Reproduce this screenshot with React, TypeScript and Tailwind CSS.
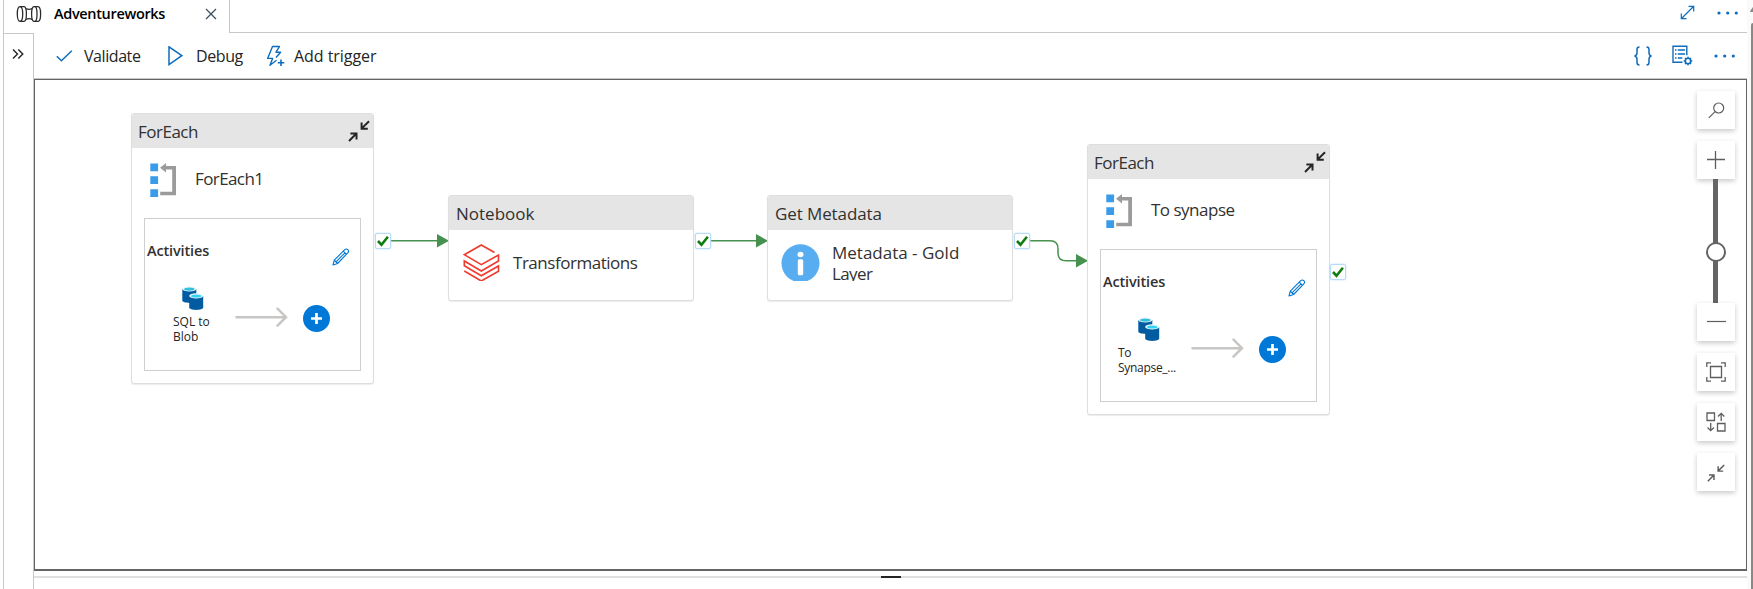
import React from "react";

const FONT = "font-['Open_Sans','Noto_Sans',sans-serif]";

function CollapseIcon({ className }: { className: string }) {
  return (
    <svg className={className} viewBox="0 0 22 22" fill="none" stroke="currentColor">
      <path d="M21 1.2 13.8 8.4M13.6 2.6v6.1h6.2M1 21l7.2-7.2M2.4 13.4h6.1v6.2" />
    </svg>
  );
}

function PipelineIcon() {
  return (
    <svg className="h-[18px] w-[26px]" viewBox="0 0 26 18" fill="none" stroke="#2b2b2b" strokeWidth="1.300">
      <ellipse cx="4" cy="9" rx="2.700" ry="7.400" />
      <path d="M4 1.600h4c1.500 0 2.400 3.300 2.400 7.400S9.500 16.400 8 16.400H4" />
      <path d="M10 3.700c1.600.7 4.600.7 6.200 0M10 14.300c1.600-.7 4.600-.7 6.200 0" />
      <path d="M22 1.600h-4c-1.500 0-2.400 3.300-2.400 7.400s.9 7.400 2.400 7.400h4" />
      <path d="M18.800 1.600c1.400 0 2.200 3.300 2.200 7.400s-.8 7.400-2.200 7.400M22 1.600c1.600 0 2.600 3.300 2.600 7.400S23.600 16.400 22 16.400" />
    </svg>
  );
}

function Dots() {
  return (
    <svg className="h-[6px] w-[22px]" viewBox="0 0 22 6" fill="#0f6cbd">
      <circle cx="2" cy="3" r="1.600" />
      <circle cx="10.700" cy="3" r="1.600" />
      <circle cx="19.300" cy="3" r="1.600" />
    </svg>
  );
}

function TabStrip() {
  return (
    <div className="ml-[3px] flex h-[33px] w-[1744px]">
      <div className="flex w-[227px] border-x border-[#c8c8c8] pl-[12px]">
        <div className="flex h-[27px] items-center">
          <PipelineIcon />
          <span className="ml-[12px] w-[111px] whitespace-nowrap text-[14.5px] font-semibold tracking-[-0.34px] text-black">
            Adventureworks
          </span>
          <svg className="ml-[40px] h-[12px] w-[12px]" viewBox="0 0 12 12" fill="none" stroke="#3b4a5c" strokeWidth="1.200">
            <path d="M1 1l10 10M11 1 1 11" />
          </svg>
        </div>
      </div>
      <div className="flex flex-1 items-start justify-end border-b border-[#c8c8c8] pr-[8px]">
        <svg className="mt-[5px] mr-[22px] h-[15px] w-[15px]" viewBox="0 0 15 15" fill="none" stroke="#0f6cbd" strokeWidth="1.200">
          <path d="M1.500 13.500l12-12M8.500 1.300h5.200v5.200M1.300 8.500v5.200h5.200" />
        </svg>
        <div className="mt-[10px] flex">
          <Dots />
        </div>
      </div>
    </div>
  );
}

function Toolbar() {
  return (
    <div className="flex h-[46px] items-center border-b border-[#c8c8c8] pl-[22px] text-[16px] text-[#242424]">
      <svg className="h-[12px] w-[17px]" viewBox="0 0 17 12" fill="none" stroke="#0f6cbd" strokeWidth="1.500">
        <path d="M.8 6.200 5.400 10.800 15.800.8" />
      </svg>
      <span className="ml-[11px] w-[57px] whitespace-nowrap tracking-[-0.43px]">Validate</span>
      <svg className="ml-[27px] h-[20px] w-[15px]" viewBox="0 0 15 20" fill="none" stroke="#0f6cbd" strokeWidth="1.500">
        <path d="M1 .8v17.800L13.800 9.700z" />
      </svg>
      <span className="ml-[13px] w-[48px] whitespace-nowrap tracking-[-0.4px]">Debug</span>
      <svg className="ml-[22px] h-[22px] w-[19px]" viewBox="0 0 19 22" fill="none" stroke="#0f6cbd" strokeWidth="1.400" strokeLinejoin="round">
        <path d="M10.500 15.200 4 20.200 6.600 13.400H1.600L6.500 1.500h7L10 7.200h4.600L10 12.500" />
        <path d="M15 14.500v6.500M11.800 17.700h6.500" strokeWidth="1.600" />
      </svg>
      <span className="ml-[9px] whitespace-nowrap tracking-[-0.05px]">Add trigger</span>
      <div className="ml-auto flex items-center pr-[11px]">
        <svg className="h-[20px] w-[20px]" viewBox="0 0 20 20" fill="none" stroke="#0f6cbd" strokeWidth="1.500">
          <path d="M6.500 1C4.600 1 4 1.900 4 3.500v3.200C4 8.600 3.200 9.700 1.500 10c1.700.3 2.500 1.400 2.500 3.300v3.200C4 18.100 4.600 19 6.500 19M13.500 1c1.900 0 2.500.9 2.500 2.500v3.200c0 1.900.8 3 2.500 3.300-1.700.3-2.500 1.400-2.500 3.300v3.200c0 1.600-.6 2.500-2.500 2.500" />
        </svg>
        <svg className="ml-[19px] h-[21px] w-[21px]" viewBox="0 0 21 21" fill="none" stroke="#0f6cbd" strokeWidth="1.400">
          <path d="M10.500 17.300H1V1.200h13.800v9M3 5h1.500M3 9h1.500M3 13h1.500M5.800 5h7.200M5.800 9h7.200M5.800 13h4.500" />
          <circle cx="16" cy="16" r="2.700" strokeWidth="1.600" />
          <path
            d="M16 11.700v1.600M16 18.700v1.600M11.700 16h1.600M18.700 16h1.600M13 13l1.100 1.100M17.900 17.900 19 19M19 13l-1.100 1.100M14.100 17.900 13 19"
            strokeWidth="1.500"
          />
        </svg>
        <div className="ml-[21px]">
          <Dots />
        </div>
      </div>
    </div>
  );
}

function ForEachIcon() {
  return (
    <svg className="h-[36px] w-[28px]" viewBox="0 0 28 36">
      <path fill="#3a9be8" d="M.3.500h7.800v7.800H.3zM.3 13.200h7.800V21H.3zM.3 26.200h7.800V34H.3z" />
      <path fill="#9b9b9b" d="M10 4.700 16 0v3h10v29.300H10.200v-3.500h12V6.500H16v3z" />
    </svg>
  );
}

function SqlIcon() {
  return (
    <svg className="h-[25px] w-[22px]" viewBox="0 0 22 25">
      <path fill="#005ba1" d="M.3 3v11.500c0 1.300 3.200 2.300 7 2.300s7-1 7-2.300V3z" />
      <ellipse cx="7.300" cy="3" rx="7" ry="2.600" fill="#e8f6fb" />
      <ellipse cx="7.300" cy="3.100" rx="5.200" ry="1.600" fill="#32bedd" />
      <path fill="#005ba1" d="M7.200 10v11.500c0 1.300 3.100 2.400 7 2.400s7-1.100 7-2.400V10z" />
      <ellipse cx="14.200" cy="9.900" rx="7" ry="2.600" fill="#e8f6fb" />
      <ellipse cx="14.200" cy="10" rx="5.200" ry="1.600" fill="#32d4f5" />
    </svg>
  );
}

const NODE = "absolute overflow-hidden rounded-[3px] border border-[#dedede] bg-white shadow-[0_1px_1px_rgba(0,0,0,0.08)]";

function ForEachNode({
  place,
  title,
  titleClass,
  activity,
  activityClass,
}: {
  place: string;
  title: string;
  titleClass: string;
  activity: [string, string];
  activityClass: string;
}) {
  return (
    <div className={`${NODE} h-[271px] w-[243px] ${place}`}>
      <div className="flex h-[34px] justify-between bg-[#e5e5e5] pr-[3px] pl-[6px] text-[#323130]">
        <span className="text-[17px] leading-[35px] tracking-[-0.5px]">ForEach</span>
        <CollapseIcon className="mt-[6px] h-[22px] w-[22px] stroke-2 text-[#252525]" />
      </div>
      <div className="flex h-[70px] pl-[18px]">
        <div className="mt-[15px]">
          <ForEachIcon />
        </div>
        <span className={`ml-[17px] text-[17px] leading-[62px] text-[#323130] ${titleClass}`}>{title}</span>
      </div>
      <div className="ml-[12px] h-[153px] w-[217px] border border-[#cfcfcf]">
        <div className="flex h-[66px] justify-between pr-[10px] pl-[2px]">
          <span className="mt-[21px] text-[14.5px] leading-[22px] font-semibold tracking-[-0.15px] text-[#323130]">Activities</span>
          <svg className="mt-[29px] h-[18px] w-[18px]" viewBox="0 0 18 18" fill="none" stroke="#0078d4" strokeWidth="1.100" strokeLinejoin="round">
            <path d="M1 17l1.300-4.800L12.700 1.700c1-1 2.200-.9 3.100 0s1 2.100 0 3.100L5.600 15.500zM2.300 12.200l3.300 3.300M11.300 3.200l3.300 3.200M4 13.800 13 4.800" />
          </svg>
        </div>
        <div className="flex">
          <div className={`w-[90px] ${activityClass}`}>
            <div className="ml-[37px] pt-[1px]">
              <SqlIcon />
            </div>
            <div className="mt-[3px] text-[12px] leading-[15px] text-[#242424]">
              <div className="w-[75px] pl-[var(--inset)]">{activity[0]}</div>
              <div className="w-[80px] pl-[var(--inset)]">{activity[1]}</div>
            </div>
          </div>
          <svg className="mt-[21px] h-[22px] w-[53px]" viewBox="0 0 53 22" fill="none" stroke="#c8c6c4" strokeWidth="2.500" strokeLinecap="round">
            <path d="M1.500 11.200h49.500M42.500 2.700l8.500 8.500-8.500 8.500" />
          </svg>
          <div className="mt-[20px] ml-[15px] flex h-[27px] w-[27px] items-center justify-center rounded-full bg-[#0078d7]">
            <svg className="h-[11px] w-[11px]" viewBox="0 0 11 11" stroke="#fff" strokeWidth="2.700">
              <path d="M5.500 0v11M0 5.500h11" />
            </svg>
          </div>
        </div>
      </div>
    </div>
  );
}

function ActivityNode({ place, kind, kindClass, children }: { place: string; kind: string; kindClass: string; children: React.ReactNode }) {
  return (
    <div className={`${NODE} h-[106px] w-[246px] ${place}`}>
      <div className={`h-[34px] bg-[#e5e5e5] pl-[7px] text-[17px] leading-[35px] text-[#323130] ${kindClass}`}>{kind}</div>
      <div className="flex h-[51px] overflow-hidden text-[17px] text-[#323130]">{children}</div>
    </div>
  );
}

function CheckPort({ place }: { place: string }) {
  return (
    <div className={`absolute flex h-[16px] w-[16px] items-center justify-center rounded-[2px] border border-[#b9dbf7] bg-white shadow-[0_0_2px_#b9dbf7] ${place}`}>
      <svg className="h-[12px] w-[12px] shrink-0" viewBox="0 0 12 12" fill="none" stroke="#107c10" strokeWidth="2.600">
        <path d="M1 6 4.500 9.700 10.900 1.800" />
      </svg>
    </div>
  );
}

function Connectors() {
  return (
    <svg className="absolute inset-0 h-[489px] w-[1712px]" viewBox="35 80 1712 489" fill="none" stroke="#46914f" strokeWidth="1.500">
      <path d="M391 240.800h47M711 240.800h47M1030 240.800h20q8 0 8 8v4q0 8 8 8h12" />
      <path stroke="none" fill="#46914f" d="M437 234v13.500l12-6.700zM756 234v13.500l12-6.700zM1076 254v13.500l12-6.700z" />
    </svg>
  );
}

const BUTTON = "flex h-[38px] w-[38px] items-center justify-center bg-white text-[#605e5c] shadow-[0_2px_5px_rgba(0,0,0,0.22)]";

function CanvasControls() {
  return (
    <div className="absolute top-[11px] left-[1662px] flex w-[38px] flex-col items-center">
      <div className={BUTTON}>
        <svg className="h-[17px] w-[17px]" viewBox="0 0 17 17" fill="none" stroke="currentColor" strokeWidth="1.200">
          <circle cx="10.700" cy="6" r="5" />
          <path d="M7.100 9.600.8 15.900" />
        </svg>
      </div>
      <div className={`mt-[12px] ${BUTTON}`}>
        <svg className="h-[18px] w-[18px]" viewBox="0 0 18 18" stroke="currentColor" strokeWidth="1.300">
          <path d="M8.500 0v18M0 8.500h18" />
        </svg>
      </div>
      <div className="mr-[1px] flex h-[124px] w-[5px] flex-col items-center justify-center bg-[#646464]">
        <div className="mt-[22px] h-[20px] w-[20px] shrink-0 rounded-full border-2 border-[#646464] bg-white" />
      </div>
      <div className={BUTTON}>
        <svg className="h-[18px] w-[19px]" viewBox="0 0 19 18" stroke="currentColor" strokeWidth="1.200">
          <path d="M0 8.500h19" />
        </svg>
      </div>
      <div className={`mt-[12px] ${BUTTON}`}>
        <svg className="h-[20px] w-[20px]" viewBox="0 0 20 20" fill="none" stroke="currentColor" strokeWidth="1.300">
          <path d="M4.500 4.500h11v11h-11zM.8 5V.8H5M15 .8h4.200V5M19.200 15v4.200H15M5 19.200H.8V15" />
        </svg>
      </div>
      <div className={`mt-[12px] ${BUTTON}`}>
        <svg className="h-[20px] w-[20px]" viewBox="0 0 20 20" fill="none" stroke="currentColor" strokeWidth="1.300">
          <path d="M1 1h7.500v7.500H1zM11.500 11.500H19V19h-7.500zM15.200 9V1.500M12 4.500l3.200-3.200 3.200 3.200M4.700 11v7.500M1.500 15.500l3.200 3.200 3.200-3.200" />
        </svg>
      </div>
      <div className={`mt-[12px] ${BUTTON}`}>
        <CollapseIcon className="mt-[2px] h-[18px] w-[18px] stroke-[1.8]" />
      </div>
    </div>
  );
}

function Canvas() {
  return (
    <div className="relative h-[492px] w-[1713px] border border-b-2 border-[#646464] bg-white">
      <Connectors />
      <ForEachNode
        place="left-[96px] top-[33px]"
        title="ForEach1"
        titleClass="tracking-[-0.6px]"
        activity={["SQL to", "Blob"]}
        activityClass="[--inset:28px]"
      />
      <ActivityNode place="left-[413px] top-[115px]" kind="Notebook" kindClass="">
        <svg className="mt-[14px] ml-[14px] h-[37px] w-[38px] shrink-0" viewBox="463 245 38 37" fill="none" stroke="#f03a2d" strokeWidth="1.600">
          <path d="M494.500 253.500 481.300 246l-17 9.700 17 10 17.200-9.700v6l-17.200 10-17-10v4.800l17 10 17.200-9.800v5.200l-17.200 9.800-17-10" />
        </svg>
        <span className="ml-[12px] leading-[65px] tracking-[-0.47px]">Transformations</span>
      </ActivityNode>
      <ActivityNode place="left-[732px] top-[115px]" kind="Get Metadata" kindClass="tracking-[-0.1px]">
        <svg className="mt-[14px] ml-[13px] h-[38px] w-[39px] shrink-0" viewBox="0 0 39 38">
          <circle cx="19.500" cy="19.200" r="19" fill="#57adf0" />
          <ellipse cx="19.500" cy="10.500" rx="3" ry="2.700" fill="#fff" />
          <rect x="16.800" y="15.200" width="5.400" height="16" rx="1.500" fill="#fff" />
        </svg>
        <div className="mt-[12px] ml-[12px] leading-[21px] whitespace-nowrap">
          <div>Metadata - Gold</div>
          <div className="tracking-[-0.6px]">Layer</div>
        </div>
      </ActivityNode>
      <ForEachNode
        place="left-[1052px] top-[64px]"
        title="To synapse"
        titleClass="tracking-[-0.5px]"
        activity={["To", "Synapse_..."]}
        activityClass="tracking-[-0.3px] [--inset:17px]"
      />
      <CheckPort place="left-[340px] top-[153px]" />
      <CheckPort place="left-[660px] top-[153px]" />
      <CheckPort place="left-[979px] top-[153px]" />
      <CheckPort place="left-[1295px] top-[184px]" />
      <CanvasControls />
    </div>
  );
}

export default function App() {
  return (
    <div className={`flex h-[589px] w-[1753px] overflow-hidden bg-white ${FONT}`}>
      <div className="w-[1747px] shrink-0">
        <TabStrip />
        <div className="ml-[3px] flex h-[556px]">
          <div className="w-[31px] shrink-0 border border-b-0 border-[#c8c8c8] pt-[14px] pl-[8px]">
            <svg className="h-[12px] w-[12px]" viewBox="0 0 12 12" fill="none" stroke="#242424" strokeWidth="1.400">
              <path d="M1 1.500 5.500 6 1 10.500M6.300 1.500 10.800 6l-4.500 4.500" />
            </svg>
          </div>
          <div className="w-[1713px]">
            <Toolbar />
            <Canvas />
            <div className="mt-[5px] flex h-[2px] bg-[#e0e0e0] pl-[847px]">
              <div className="w-[20px] bg-[#242424]" />
            </div>
          </div>
        </div>
      </div>
      <div className="flex w-[6px] flex-col items-end bg-[#fafafa]">
        <svg className="mt-[7px] h-[6px] w-[3px]" viewBox="0 0 3 6">
          <path fill="#8a8a8a" d="M3 0v5H1Q-.5 5 .5 3.500z" />
        </svg>
        <div className="mt-[10px] w-[2px] flex-1 rounded-tl-[2px] bg-[#8a8886]" />
      </div>
    </div>
  );
}
